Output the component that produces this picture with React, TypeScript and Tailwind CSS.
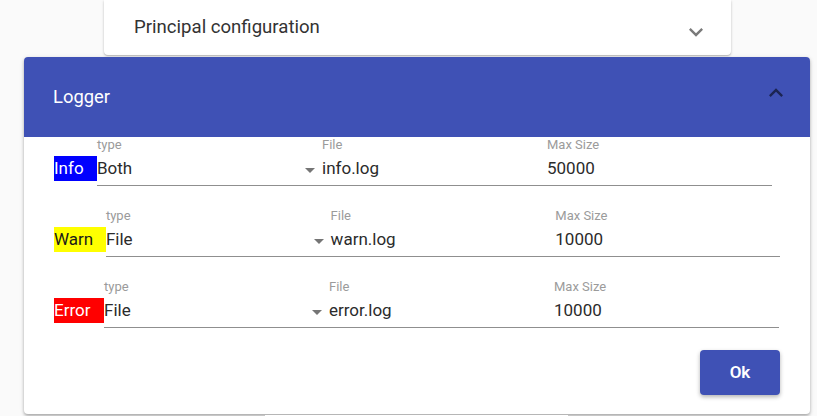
import React from "react";

const font = { fontFamily: "Roboto, 'Noto Sans', sans-serif" };

function Row({
  name,
  boxW,
  boxCls,
  type,
  file,
  size,
}: {
  name: string;
  boxW: string;
  boxCls: string;
  type: string;
  file: string;
  size: string;
}) {
  return (
    <div className="flex items-end">
      <div className={`${boxW} ${boxCls} h-[25px] mb-[5px] flex items-center text-[17px] leading-none`}>{name}</div>
      <div className="grid grid-cols-3 w-[675px] border-b border-[#8f8f8f]">
        <div className="relative">
          <div className="h-[15px] text-[13px] leading-[15px] text-[#9b9b9b]">type</div>
          <div className="mt-[6px] pb-[7px] text-[17px] leading-[20px] text-[#2b2b2b]">{type}</div>
          <svg className="absolute right-0 top-[21px]" width="24" height="24" viewBox="0 0 24 24">
            <path d="M7 10l5 5 5-5z" fill="#757575" />
          </svg>
        </div>
        <div>
          <div className="h-[15px] text-[13px] leading-[15px] text-[#9b9b9b]">File</div>
          <div className="mt-[6px] pb-[7px] text-[17px] leading-[20px] text-[#2b2b2b]">{file}</div>
        </div>
        <div>
          <div className="h-[15px] text-[13px] leading-[15px] text-[#9b9b9b]">Max Size</div>
          <div className="mt-[6px] pb-[7px] text-[17px] leading-[20px] text-[#2b2b2b]">{size}</div>
        </div>
      </div>
    </div>
  );
}

export default function App() {
  return (
    <div className="h-[416px] w-[817px] overflow-hidden bg-[#fafafa]" style={font}>
      <div className="ml-[104px] w-[627px] h-[55px] bg-white rounded-b-[4px] shadow-[0_1px_3px_rgba(0,0,0,0.2),0_1px_1px_rgba(0,0,0,0.12)] flex items-center justify-between pl-[30px] pr-[21px]">
        <span className="text-[18.6px] text-[#333333]">Principal configuration</span>
        <svg className="mt-[8px]" width="28" height="28" viewBox="0 0 24 24">
          <path d="M16.59 8.59L12 13.17 7.41 8.59 6 10l6 6 6-6z" fill="#7a7a7a" />
        </svg>
      </div>
      <div className="mt-[2px] ml-[24px] w-[786px] bg-white rounded-[4px] shadow-[0_2px_3px_rgba(0,0,0,0.25),0_1px_5px_rgba(0,0,0,0.12)]">
        <div className="h-[80px] bg-[#3f51b5] rounded-t-[4px] flex items-center justify-between pl-[29px] pr-[20px]">
          <span className="text-[18.4px] text-white">Logger</span>
          <svg className="-mt-[8px]" width="28" height="28" viewBox="0 0 24 24">
            <path d="M12 8l-6 6 1.41 1.41L12 10.83l4.59 4.58L18 14z" fill="#1c2553" />
          </svg>
        </div>
        <div className="pl-[30px] pr-[30px] pb-[19px] flex flex-col gap-[22px]">
          <Row name="Info" boxW="w-[43px]" boxCls="bg-[#0000ff] text-white" type="Both" file="info.log" size="50000" />
          <Row name="Warn" boxW="w-[52px]" boxCls="bg-[#ffff00] text-[#1a1a1a]" type="File" file="warn.log" size="10000" />
          <Row name="Error" boxW="w-[50px]" boxCls="bg-[#ff0000] text-white" type="File" file="error.log" size="10000" />
          <div className="flex justify-end">
            <button className="w-[80px] h-[45px] rounded-[4px] bg-[#3f51b5] text-white text-[17px] font-semibold shadow-[0_2px_4px_rgba(0,0,0,0.3)]">
              Ok
            </button>
          </div>
        </div>
      </div>
      <div className="mt-[1px] ml-[265px] w-[303px] h-[20px] bg-white"></div>
    </div>
  );
}
